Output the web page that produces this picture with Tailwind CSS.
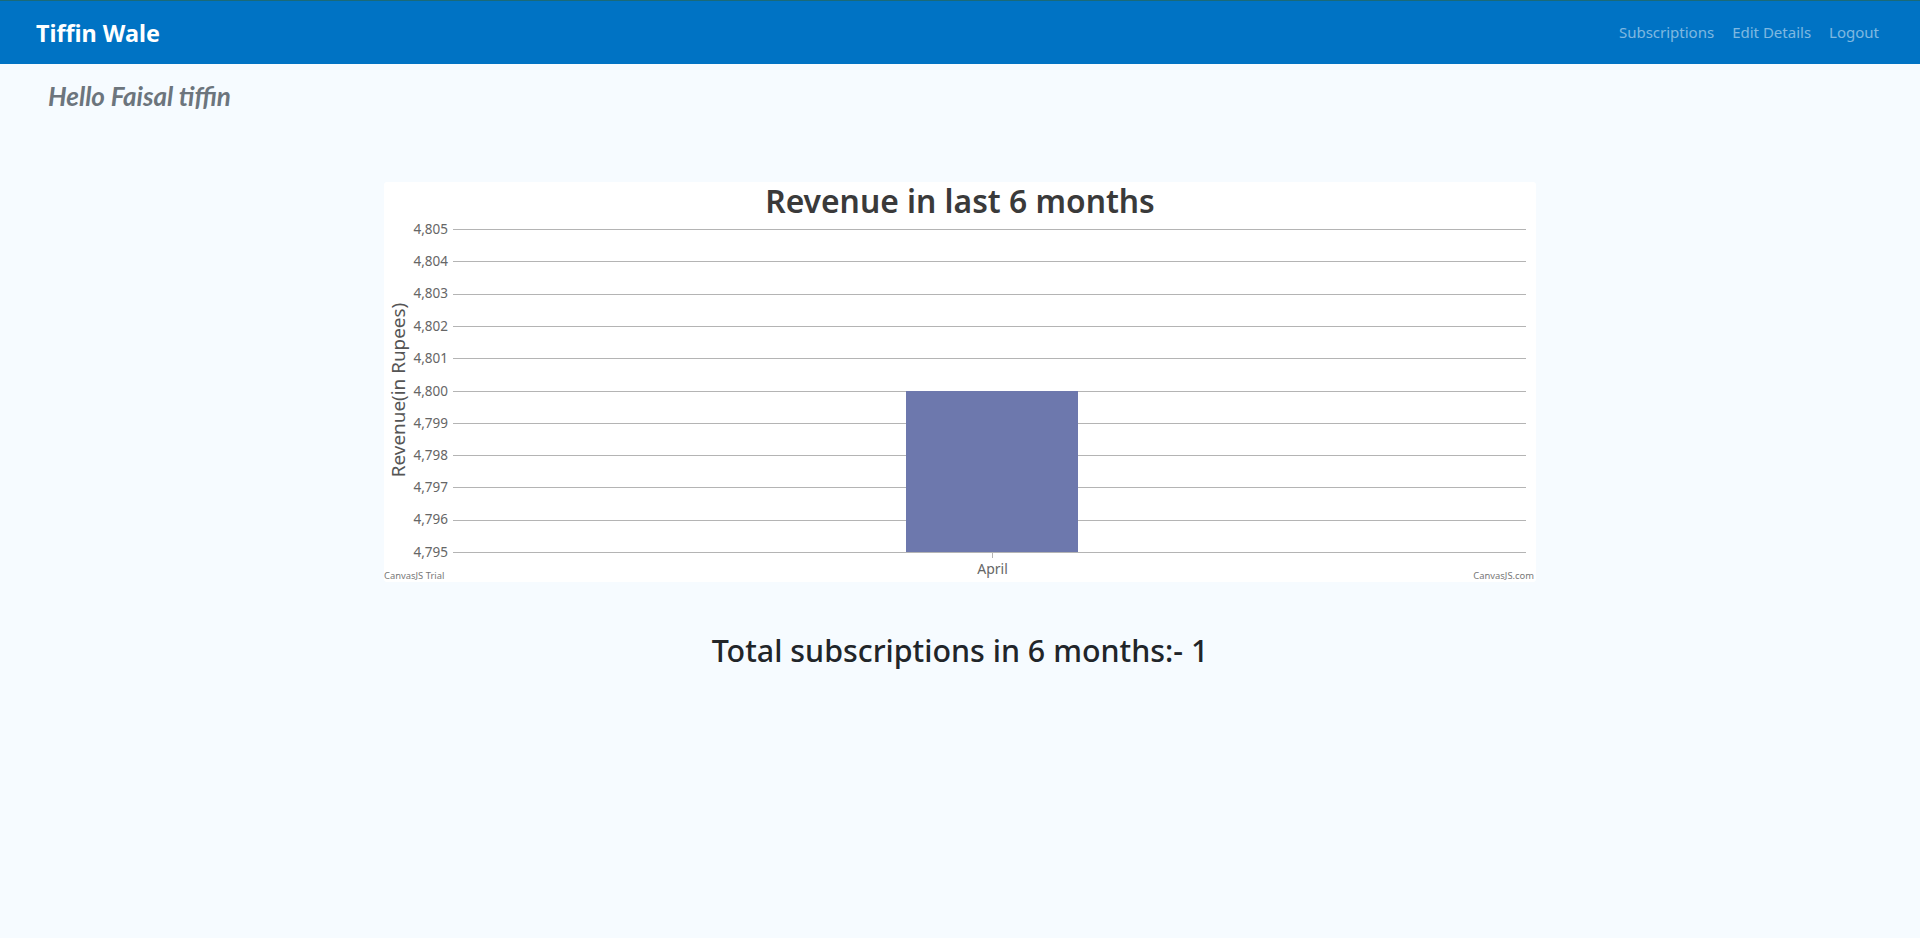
<!DOCTYPE html>
<html lang="en">
<head>
<meta charset="utf-8">
<title>Tiffin Wale</title>
<script src="https://cdn.jsdelivr.net/npm/@tailwindcss/browser@4"></script>
</head>
<body class="bg-[#f6fbff] font-['Noto_Sans',sans-serif] h-[938px] overflow-hidden">
<nav class="h-16 bg-[#0073c4] border-t border-t-[#1a6a78] flex items-center justify-between pl-9 pr-[41px]">
  <a class="text-[23.4px] font-bold text-white leading-none pt-[2px]">Tiffin Wale</a>
  <div class="flex gap-[18px] text-[15px] text-white/50">
    <a>Subscriptions</a><a>Edit Details</a><a>Logout</a>
  </div>
</nav>
<h4 class="pl-12 pt-[16px] h-[118px] text-[26px] italic font-bold text-[#6c757d] font-['Lato',sans-serif] leading-[32px]">Hello Faisal tiffin</h4>
<div class="w-[1152px] h-[400px] bg-white rounded-[3px] ml-[384px]">
<svg width="1152" height="400" viewBox="384 182 1152 400" class="block overflow-visible">
  <g stroke="#b4b4b4" stroke-width="1">
    <path d="M453 229.5H1526M453 261.5H1526M453 294.5H1526M453 326.5H1526M453 358.5H1526M453 391.5H1526M453 423.5H1526M453 455.5H1526M453 487.5H1526M453 520.5H1526M453 552.5H1526"/>
    <path d="M992.5 552V558"/>
  </g>
  <rect x="906" y="391" width="172" height="161" fill="#6d78ad"/>
  <text x="960" y="213" text-anchor="middle" font-size="31.8" font-weight="600" fill="#3a3a3a">Revenue in last 6 months</text>
  <g font-size="13.5" fill="#666" text-anchor="end">
    <text x="448" y="234">4,805</text><text x="448" y="266">4,804</text><text x="448" y="298">4,803</text><text x="448" y="331">4,802</text><text x="448" y="363">4,801</text><text x="448" y="396">4,800</text><text x="448" y="428">4,799</text><text x="448" y="460">4,798</text><text x="448" y="492">4,797</text><text x="448" y="524">4,796</text><text x="448" y="557">4,795</text>
  </g>
  <text x="992.5" y="574" text-anchor="middle" font-size="14" fill="#666">April</text>
  <text transform="translate(405 390) rotate(-90)" text-anchor="middle" font-size="18.9" fill="#555">Revenue(in Rupees)</text>
  <text x="384" y="579" font-size="9.4" fill="#777">CanvasJS Trial</text>
  <text x="1534" y="579" text-anchor="end" font-size="9.4" fill="#777">CanvasJS.com</text>
</svg>
</div>
<h2 class="mt-[50px] text-center text-[30.4px] leading-[38px] font-medium text-[#212529]">Total subscriptions in 6 months:- 1</h2>
</body>
</html>
